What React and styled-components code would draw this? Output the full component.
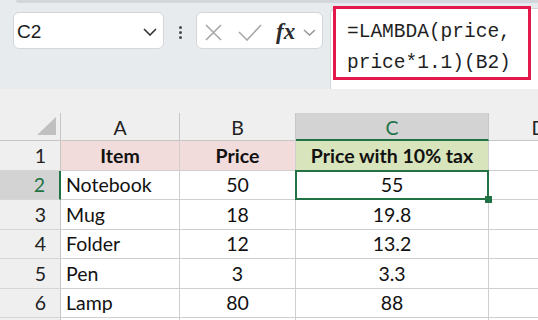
import styled, { createGlobalStyle } from "styled-components";

const GlobalStyle = createGlobalStyle`
  html, body {
    margin: 0;
    padding: 0;
  }
  body {
    width: 538px;
    height: 320px;
    overflow: hidden;
    background: #efefef;
  }
`;

const Page = styled.div`
  width: 538px;
  height: 320px;
  overflow: hidden;
  display: flex;
  flex-direction: column;
  font-family: Lato, "Noto Sans", sans-serif;
`;

const Toolbar = styled.div`
  position: relative;
  flex: none;
  height: 89px;
  background: #e8ebee;
  display: flex;
  align-items: flex-start;

  &::before {
    content: "";
    position: absolute;
    top: 0;
    left: 16px;
    right: 0;
    height: 3px;
    background: #d3d6da;
    border-bottom-left-radius: 4px;
  }
`;

const NameBox = styled.div`
  margin: 12px 0 0 13px;
  width: 151px;
  height: 37px;
  box-sizing: border-box;
  padding: 3px 6px 0 3px;
  background: #fff;
  border: 1px solid #d3d6da;
  border-radius: 6px;
  display: flex;
  align-items: center;
  justify-content: space-between;
  font-family: "Liberation Sans", Arial, sans-serif;
  font-size: 19px;
  color: #1a1a1a;
`;

const Dots = styled.div`
  width: 32px;
  margin-top: 26px;
  display: flex;
  flex-direction: column;
  align-items: center;
  gap: 2px;

  span {
    width: 3px;
    height: 3px;
    border-radius: 50%;
    background: #4a4a4a;
  }
`;

const FxBox = styled.div`
  margin-top: 12px;
  width: 127px;
  height: 37px;
  box-sizing: border-box;
  padding-top: 3px;
  background: #fff;
  border: 1px solid #d3d6da;
  border-radius: 6px;
  display: flex;
  align-items: center;
`;

const Slot = styled.span`
  display: flex;
  align-items: center;
  margin-left: ${(p) => p.$ml}px;
`;

const FxLabel = styled.span`
  margin-left: 14px;
  margin-top: -2px;
  font-family: "Liberation Serif", "Times New Roman", serif;
  font-style: italic;
  font-weight: 700;
  font-size: 23px;
  line-height: 1;
  color: #2b2b2b;
`;

const FormulaArea = styled.div`
  flex: 1;
  margin: 8px 0 0 7px;
  height: 81px;
  box-sizing: border-box;
  background: #fff;
  border-left: 1px solid #d3d6da;
  border-top: 1px solid #d3d6da;
  border-top-left-radius: 6px;
`;

const Highlight = styled.div`
  margin: -3px 0 0 2px;
  width: 198px;
  height: 74px;
  box-sizing: border-box;
  border: 3px solid #e3194b;
  padding: 8px 0 0 11px;
  font-family: "Liberation Mono", "Courier New", monospace;
  font-size: 19.5px;
  line-height: 31px;
  color: #1f1f1f;
  white-space: pre;
`;

const SheetArea = styled.div`
  flex: 1;
  padding-top: 24px;
  background: #efefef;
  overflow: hidden;
`;

const Sheet = styled.div`
  display: grid;
  grid-template-columns: 61px 119px 116px 193px 100px;
  grid-template-rows: 28px repeat(7, 29.5px);
  width: 538px;
  overflow: hidden;
  font-size: 19.5px;
  color: #111;
`;

const Corner = styled.div`
  box-sizing: border-box;
  border-right: 1px solid #c6c6c6;
  border-bottom: 1px solid #c6c6c6;
  display: flex;
  align-items: flex-end;
  justify-content: flex-end;
  padding: 0 4px 5px 0;
`;

const ColHead = styled.div`
  box-sizing: border-box;
  display: flex;
  align-items: center;
  justify-content: center;
  background: ${(p) => (p.$active ? "#d3d3d3" : "#efefef")};
  color: ${(p) => (p.$active ? "#217346" : "#222")};
  border-right: ${(p) => (p.$last ? "none" : "1px solid #c6c6c6")};
  border-bottom: ${(p) =>
    p.$active ? "2px solid #217346" : "1px solid #c6c6c6"};
  padding-top: ${(p) => (p.$active ? "2px" : "1px")};
`;

const RowHead = styled.div`
  box-sizing: border-box;
  display: flex;
  align-items: center;
  justify-content: flex-end;
  padding-right: 14px;
  background: ${(p) => (p.$active ? "#d3d3d3" : "#efefef")};
  color: ${(p) => (p.$active ? "#217346" : "#222")};
  border-right: ${(p) =>
    p.$active ? "2px solid #217346" : "1px solid #c6c6c6"};
  border-bottom: 1px solid #d6d6d6;
`;

const Cell = styled.div`
  position: relative;
  box-sizing: border-box;
  display: flex;
  align-items: center;
  justify-content: ${(p) => (p.$left ? "flex-start" : "center")};
  padding-left: ${(p) => (p.$left ? "5px" : "0")};
  background: ${(p) => p.$fill || "#fff"};
  font-weight: ${(p) => (p.$bold ? 700 : 400)};
  border-right: ${(p) => (p.$last ? "none" : "1px solid #cfcfcf")};
  border-bottom: 1px solid #cfcfcf;
  white-space: nowrap;

  ${(p) =>
    p.$selected &&
    `
    &::after {
      content: "";
      position: absolute;
      top: -1px;
      left: -1px;
      right: -1px;
      bottom: -1px;
      border: 2px solid #217346;
    }
    &::before {
      content: "";
      position: absolute;
      right: -4px;
      bottom: -4px;
      width: 7px;
      height: 7px;
      background: #217346;
      z-index: 1;
    }
  `}
`;

const Chevron = ({ w = 14, h = 8, color = "#333" }) => (
  <svg width={w} height={h} viewBox={`0 0 ${w} ${h}`}>
    <polyline
      points={`1,1 ${w / 2},${h - 1} ${w - 1},1`}
      fill="none"
      stroke={color}
      strokeWidth="1.6"
    />
  </svg>
);

const rows = [
  ["Notebook", "50", "55"],
  ["Mug", "18", "19.8"],
  ["Folder", "12", "13.2"],
  ["Pen", "3", "3.3"],
  ["Lamp", "80", "88"],
];

const RowFragment = ({ n, item, price, taxed }) => (
  <>
    <RowHead $active={n === 2}>{n}</RowHead>
    <Cell $left>{item}</Cell>
    <Cell>{price}</Cell>
    <Cell $selected={n === 2}>{taxed}</Cell>
    <Cell $last />
  </>
);

const App = () => {
  return (
    <Page>
      <GlobalStyle />
      <Toolbar>
        <NameBox>
          <span>C2</span>
          <Chevron />
        </NameBox>
        <Dots>
          <span />
          <span />
          <span />
        </Dots>
        <FxBox>
          <Slot $ml={8}>
            <svg width="17" height="17" viewBox="0 0 17 17">
              <path d="M1 1L16 16M16 1L1 16" stroke="#a8a8a8" strokeWidth="1.6" />
            </svg>
          </Slot>
          <Slot $ml={16}>
            <svg width="24" height="17" viewBox="0 0 24 17">
              <polyline
                points="1,8 9,16 23,1"
                fill="none"
                stroke="#a8a8a8"
                strokeWidth="1.6"
              />
            </svg>
          </Slot>
          <FxLabel>fx</FxLabel>
          <Slot $ml={8}>
            <Chevron w={13} h={7} color="#9a9a9a" />
          </Slot>
        </FxBox>
        <FormulaArea>
          <Highlight>{"=LAMBDA(price,\nprice*1.1)(B2)"}</Highlight>
        </FormulaArea>
      </Toolbar>
      <SheetArea>
        <Sheet>
          <Corner>
            <svg width="19" height="18" viewBox="0 0 19 18">
              <polygon points="19,0 19,18 0,18" fill="#c0c0c0" />
            </svg>
          </Corner>
          <ColHead>A</ColHead>
          <ColHead>B</ColHead>
          <ColHead $active>C</ColHead>
          <ColHead $last>D</ColHead>

          <RowHead>1</RowHead>
          <Cell $fill="#f2dcdb" $bold>
            Item
          </Cell>
          <Cell $fill="#f2dcdb" $bold>
            Price
          </Cell>
          <Cell $fill="#d8e4bc" $bold>
            Price with 10% tax
          </Cell>
          <Cell $last />

          {rows.map(([item, price, taxed], i) => (
            <RowFragment
              key={i}
              n={i + 2}
              item={item}
              price={price}
              taxed={taxed}
            />
          ))}

          <RowHead />
          <Cell />
          <Cell />
          <Cell />
          <Cell $last />
        </Sheet>
      </SheetArea>
    </Page>
  );
};

export default App;
